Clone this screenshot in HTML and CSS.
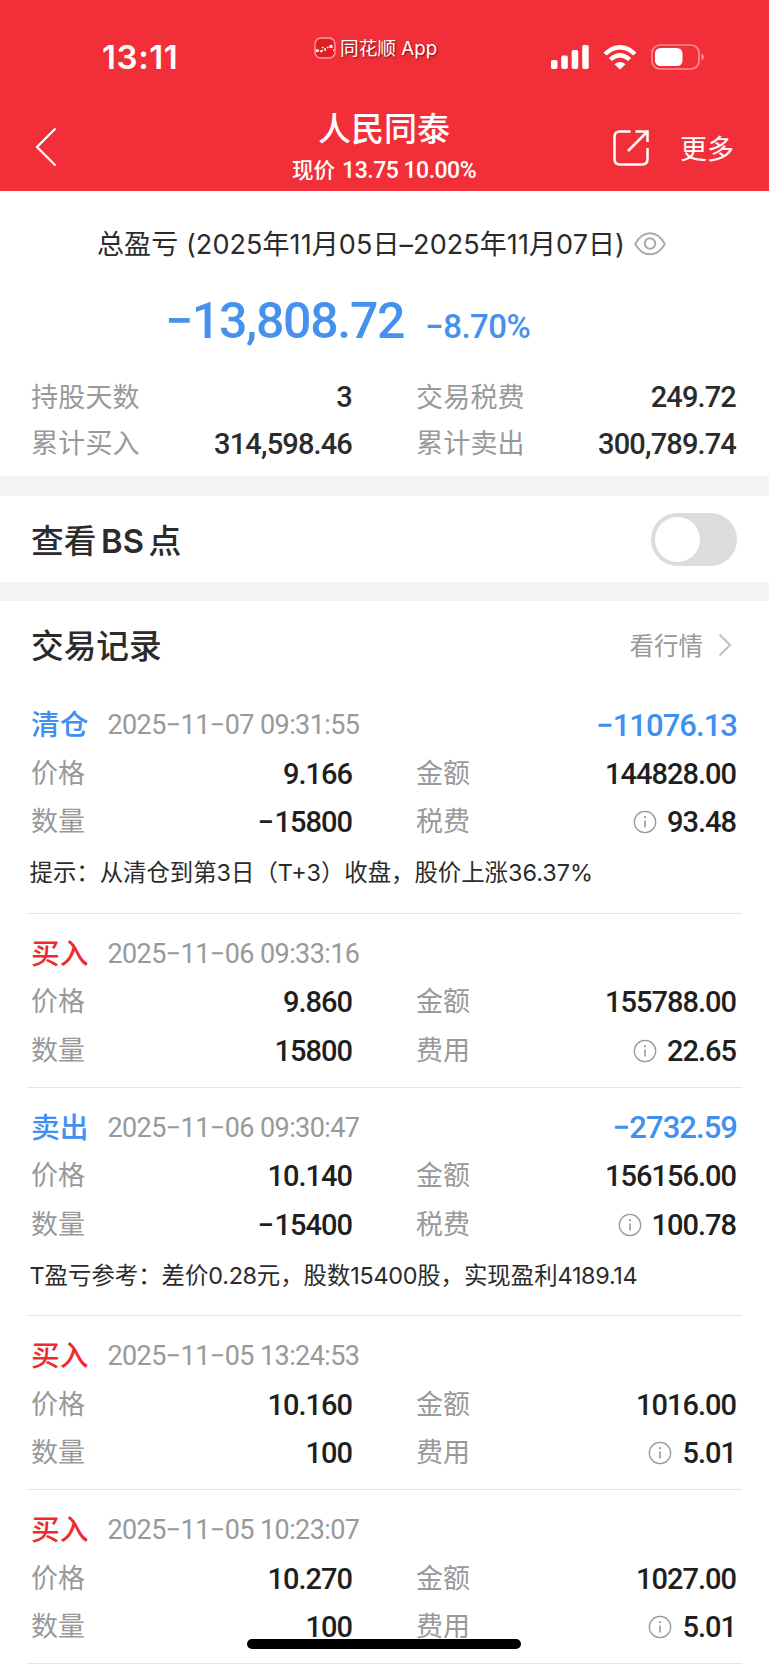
FILE: index.html
```html
<!DOCTYPE html>
<html lang="zh-CN">
<head>
<meta charset="utf-8">
<title>人民同泰</title>
<link rel="stylesheet" href="styles.css">
</head>
<body>
<header class="header">
  <div class="status">
    <div class="clock">13:11</div>
    <div class="app">
      <svg class="app-icon" viewBox="0 0 22 22"><rect x="1" y="1" width="20" height="20" rx="6" fill="#e01f22" stroke="#ff9a9c" stroke-width="1.4"/><path d="M2 13.500h3M6 14l1.500 .5 1-1.500M8 11l1.500-1M11 11v3M13 11l1.500-1M19 13h1" fill="none" stroke="#fff" stroke-width="1.500"/><path d="M1.500 12.500h3v2.500h-3zM15.500 8h3v3h-3z" fill="#fff"/></svg>
      <span class="app-name">同花顺 App</span>
    </div>
    <div class="signals">
      <svg class="cell" viewBox="0 0 38 24" fill="#fff"><rect x="0" y="15" width="6.500" height="9" rx="1.800"/><rect x="10.300" y="10.500" width="6.500" height="13.500" rx="1.800"/><rect x="20.700" y="5" width="6.500" height="19" rx="1.800"/><rect x="31.200" y="0" width="6.500" height="24" rx="1.800"/></svg>
      <svg class="wifi" viewBox="0 0 34 25"><g fill="none" stroke="#fff" stroke-width="4.300"><path d="M2 9Q17-4.500 32 9"/><path d="M7.300 14.500Q17 6 26.700 14.500"/></g><path d="M11.500 19.200Q17 14.700 22.500 19.200L17 24.500Z" fill="#fff"/></svg>
      <svg class="battery" viewBox="0 0 54 26"><rect x="1" y="1" width="47" height="24" rx="8" fill="none" stroke="#fff" stroke-opacity=".45" stroke-width="1.700"/><rect x="4" y="4" width="27.500" height="18" rx="5.500" fill="#fff"/><path d="M50.500 9.500q5 3.500 0 7z" fill="#fff" fill-opacity=".5"/></svg>
    </div>
  </div>
  <div class="nav">
    <svg class="back" viewBox="0 0 22 40"><path d="M20.500 1.500L2 20L20.500 38.500" fill="none" stroke="#fff" stroke-width="2.300"/></svg>
    <div class="heading">
      <h1 class="stock">人民同泰</h1>
      <p class="quote"><span class="quote-label">现价</span> 13.75 10.00%</p>
    </div>
    <svg class="share" viewBox="0 0 36 36"><path d="M17.500 1.500H7Q1.500 1.500 1.500 7V29Q1.500 34.500 7 34.500H29Q34.500 34.500 34.500 29V18M22.500 1.500H34.500V12M34 2L15 21" fill="none" stroke="#fff" stroke-width="2.500"/></svg>
    <div class="more">更多</div>
  </div>
</header>
<section class="summary">
  <div class="period"><span>总盈亏 (2025年11月05日–2025年11月07日)</span>
    <svg class="eye" viewBox="0 0 32 24"><path d="M1.200 12Q7 1.200 16 1.200T30.800 12Q25 22.300 16 22.300T1.200 12Z" fill="none" stroke="#aaa" stroke-width="1.900"/><circle cx="16" cy="11.500" r="5.200" fill="none" stroke="#aaa" stroke-width="2"/></svg>
  </div>
  <div class="total"><span class="amount">−13,808.72</span><span class="rate">−8.70%</span></div>
  <div class="row stat"><span class="label">持股天数</span><span class="num">3</span><span class="label">交易税费</span><span class="num">249.72</span></div>
  <div class="row stat"><span class="label">累计买入</span><span class="num">314,598.46</span><span class="label">累计卖出</span><span class="num">300,789.74</span></div>
</section>
<section class="bs">
  <h2 class="title">查看 <span class="latin">BS</span> 点</h2>
  <div class="toggle"><div class="knob"></div></div>
</section>
<section class="records">
  <div class="records-head">
    <h2 class="title">交易记录</h2>
    <div class="link">看行情<svg class="chevron" viewBox="0 0 14 24"><path d="M1.500 1.500L12 12L1.500 22.500" fill="none" stroke="#c4c4c4" stroke-width="2.300"/></svg></div>
  </div>
  <article class="record">
    <div class="head"><span class="kind blue">清仓</span><time class="time">2025−11−07 09:31:55</time><span class="profit">−11076.13</span></div>
    <div class="row"><span class="label">价格</span><span class="num">9.166</span><span class="label">金额</span><span class="num">144828.00</span></div>
    <div class="row"><span class="label">数量</span><span class="num"><span class="minus">−</span>15800</span><span class="label">税费</span><span class="num"><svg class="info" viewBox="0 0 24 24"><use href="#info"/></svg>93.48</span></div>
    <p class="tip">提示：从清仓到第3日（T+3）收盘，股价上涨36.37%</p>
  </article>
  <article class="record">
    <div class="head"><span class="kind red">买入</span><time class="time">2025−11−06 09:33:16</time></div>
    <div class="row"><span class="label">价格</span><span class="num">9.860</span><span class="label">金额</span><span class="num">155788.00</span></div>
    <div class="row"><span class="label">数量</span><span class="num">15800</span><span class="label">费用</span><span class="num"><svg class="info" viewBox="0 0 24 24"><use href="#info"/></svg>22.65</span></div>
  </article>
  <article class="record">
    <div class="head"><span class="kind blue">卖出</span><time class="time">2025−11−06 09:30:47</time><span class="profit">−2732.59</span></div>
    <div class="row"><span class="label">价格</span><span class="num">10.140</span><span class="label">金额</span><span class="num">156156.00</span></div>
    <div class="row"><span class="label">数量</span><span class="num"><span class="minus">−</span>15400</span><span class="label">税费</span><span class="num"><svg class="info" viewBox="0 0 24 24"><use href="#info"/></svg>100.78</span></div>
    <p class="tip">T盈亏参考：差价<span class="digits">0.28</span>元，股数<span class="digits">15400</span>股，实现盈利<span class="digits">4189.14</span></p>
  </article>
  <article class="record">
    <div class="head"><span class="kind red">买入</span><time class="time">2025−11−05 13:24:53</time></div>
    <div class="row"><span class="label">价格</span><span class="num">10.160</span><span class="label">金额</span><span class="num">1016.00</span></div>
    <div class="row"><span class="label">数量</span><span class="num">100</span><span class="label">费用</span><span class="num"><svg class="info" viewBox="0 0 24 24"><use href="#info"/></svg>5.01</span></div>
  </article>
  <article class="record">
    <div class="head"><span class="kind red">买入</span><time class="time">2025−11−05 10:23:07</time></div>
    <div class="row"><span class="label">价格</span><span class="num">10.270</span><span class="label">金额</span><span class="num">1027.00</span></div>
    <div class="row"><span class="label">数量</span><span class="num">100</span><span class="label">费用</span><span class="num"><svg class="info" viewBox="0 0 24 24"><use href="#info"/></svg>5.01</span></div>
  </article>
</section>
<div class="home-bar"></div>
<svg class="defs" width="0" height="0"><defs><g id="info"><circle cx="12" cy="12" r="10.700" fill="none" stroke="#999" stroke-width="1.300"/><path d="M12 10.500V17.500" stroke="#999" stroke-width="1.600"/><circle cx="12" cy="7.200" r="1.100" fill="#999"/></g></defs></svg>
</body>
</html>
```
FILE: styles.css
```css
* { box-sizing: border-box; margin: 0; padding: 0; }
body {
  width: 769px; height: 1665px; overflow: hidden; background: #fff; color: #2b2b2b;
  font-family: Inter, "Noto Sans CJK SC", sans-serif; position: relative;
}
svg { display: block; flex: none; }
.header { height: 191px; background: #f22f38; color: #fff; }
.status { height: 100px; display: grid; grid-template-columns: 280px 210px 279px; }
.clock { padding: 35px 0 0 102px; font-size: 33px; font-weight: 600; line-height: 44px; letter-spacing: .6px; }
.app { display: flex; align-items: center; padding-left: 34px; height: 26px; margin-top: 35px; gap: 4px; }
.app-icon { width: 22px; height: 22px; }
.app-name { font-size: 18.700px; line-height: 26px; white-space: nowrap; text-shadow: 1px 1px 2px rgba(60, 0, 0, .75); padding-top: 1px; }
.signals { display: flex; align-items: center; height: 26px; margin-top: 44px; padding-left: 61px; }
.cell { width: 38px; height: 24px; margin-right: 14px; }
.wifi { width: 34px; height: 25px; margin-right: 14px; }
.battery { width: 54px; height: 26px; }
.nav { height: 91px; display: flex; align-items: flex-start; padding-left: 35px; }
.back { width: 22px; height: 40px; margin-top: 27px; }
.heading { width: 454px; margin-left: 100px; text-align: center; }
.stock { font-size: 33px; line-height: 44px; font-weight: 500; margin-top: 7px; }
.quote { font-family: Roboto, "Noto Sans CJK SC", sans-serif; font-size: 23px; line-height: 28px; font-weight: 500; margin-top: 6px; letter-spacing: -.5px; }
.quote-label { font-size: 21.500px; margin-right: 2px; letter-spacing: 0; }
.share { width: 36px; height: 36px; margin: 30px 0 0 2px; }
.more { font-size: 27px; line-height: 40px; margin: 30px 0 0 31px; }

.summary { height: 286px; padding-top: 1px; margin-top: -1px; }
.period { display: flex; align-items: center; gap: 9px; height: 40px; padding-left: 97px; margin-top: 33px; font-size: 27px; line-height: 40px; white-space: nowrap; letter-spacing: .08px; }
.period span { padding-top: 2px; }
.eye { width: 32px; height: 24px; }
.total { height: 70px; margin-top: 22px; padding-left: 165px; display: flex; align-items: baseline; color: #4691ee; font-family: Roboto, sans-serif; line-height: 70px; font-weight: 500; }
.amount { font-size: 50px; letter-spacing: -1.300px; }
.rate { font-size: 33px; margin-left: 21px; letter-spacing: -.5px; }
.row { display: grid; grid-template-columns: 141px 180px 131px 1fr; align-items: center; height: 49px; padding: 0 33px 0 31px; }
.row > :nth-child(3) { padding-left: 64px; width: 180px; }
.label { font-size: 27px; line-height: 40px; color: #999; white-space: nowrap; padding-top: 1px; }
.num { display: flex; justify-content: flex-end; align-items: center; font-family: Roboto, sans-serif; font-size: 29px; line-height: 40px; font-weight: 500; letter-spacing: -1px; }
.minus { margin-right: 1.500px; }
.stat { height: 46.500px; }
.stat .label { letter-spacing: .2px; }
.stat .num { letter-spacing: -.85px; }
.total + .stat { margin-top: 18px; }

.bs { height: 125px; border-top: 20px solid #f4f4f4; border-bottom: 19px solid #f4f4f4; display: flex; align-items: center; justify-content: space-between; padding: 0 32px 0 31px; }
.title { font-size: 32.700px; line-height: 48px; font-weight: 500; padding-top: 3px; word-spacing: -4px; }
.latin { font-weight: 600; }
.toggle { width: 86px; height: 53px; border-radius: 27px; background: #dcdcdc; padding: 4px; }
.knob { width: 45px; height: 45px; border-radius: 50%; background: #fff; }

.records-head { height: 84px; display: flex; justify-content: space-between; align-items: center; padding: 3px 37px 0 31px; }
.link { display: flex; align-items: center; font-size: 24.500px; color: #999; gap: 15px; }
.chevron { width: 14px; height: 24px; }
.record { height: 174px; margin: 0 27px; padding-top: 16px; border-bottom: 1px solid #e5e5e5; }
.record:has(.tip) { height: 228.500px; }
.head { height: 48px; display: flex; align-items: center; padding: 0 5px 0 4px; }
.kind { font-size: 28.700px; font-weight: 500; line-height: 40px; }
.blue { color: #4090f0; }
.red { color: #f02a2e; }
.time { font-family: Roboto, sans-serif; font-size: 27px; line-height: 40px; color: #999; margin-left: 19px; letter-spacing: -.58px; }
.profit { font-family: Roboto, sans-serif; font-size: 31px; line-height: 40px; font-weight: 500; color: #4090f0; margin-left: auto; letter-spacing: -.95px; padding-top: 1px; }
.record .row { padding: 0 6px 0 4px; height: 48.500px; }
.record .num { color: #1f1f1f; padding-top: 1px; }
.info { width: 24px; height: 24px; margin-right: 10px; }
.tip { font-size: 23.400px; line-height: 40px; padding: 7px 3px 0 2.500px; white-space: nowrap; }
.digits { letter-spacing: -.3px; }
.home-bar { position: absolute; left: 247px; top: 1639px; width: 274px; height: 10px; border-radius: 5px; background: #000; }
.defs { position: absolute; }
```
